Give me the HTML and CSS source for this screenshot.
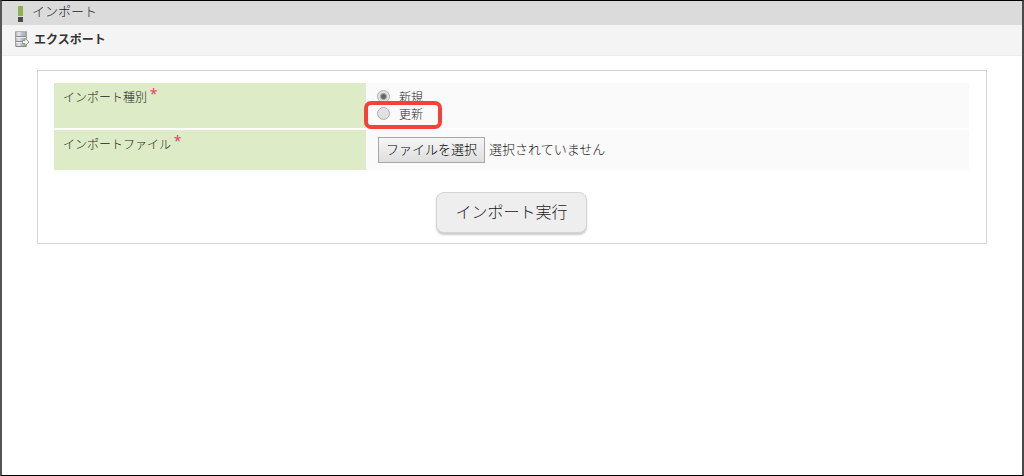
FILE: index.html
```html
<!DOCTYPE html>
<html lang="ja">
<head>
<meta charset="utf-8">
<title>インポート</title>
<link rel="stylesheet" href="styles.css">
</head>
<body>
<div class="frame">
  <header class="title-bar">
    <svg class="title-icon" width="5" height="16" viewBox="0 0 5 16" aria-hidden="true">
      <rect width="5" height="10" fill="#8cb34b"/>
      <rect y="11" width="5" height="5" fill="#4a4d40"/>
    </svg>
    <h1 class="title">インポート</h1>
  </header>
  <nav class="tool-bar">
    <a class="tool-link" href="#">
      <svg class="tool-icon" width="15" height="16" viewBox="0 0 15 16" aria-hidden="true">
        <defs>
          <linearGradient id="server" x1="0" x2="1">
            <stop offset="0" stop-color="#a4a4a4"/>
            <stop offset=".3" stop-color="#e6e6ea"/>
            <stop offset=".6" stop-color="#b9b9ca"/>
            <stop offset="1" stop-color="#a2a2a2"/>
          </linearGradient>
        </defs>
        <rect width="12" height="16" rx="1" fill="url(#server)"/>
        <path d="M.5 1v14M11.500 1v14" stroke="#a0a0a0"/>
        <path d="M1 .5h10" stroke="#b4b4b4"/>
        <path d="M1 5.500h10M1 10.500h10M1 15.500h10" stroke="#8a8a8a"/>
        <path d="M1 6.500h10M1 11.500h10" stroke="#ededed"/>
        <path d="M7.500 9.500h2.500v-2.500l4 4-4 4v-2.500h-2.500z" fill="#eef4ea" stroke="#8d9b8d"/>
      </svg>
      <span>エクスポート</span>
    </a>
  </nav>
  <main class="content">
    <form class="panel">
      <div class="fields">
        <div class="label-cell" id="kind-label">インポート種別 <span class="required">*</span></div>
        <div class="value-cell kind-options" role="radiogroup" aria-labelledby="kind-label">
          <label class="option"><input class="radio" type="radio" name="kind" checked>新規</label>
          <label class="option"><input class="radio" type="radio" name="kind">更新</label>
          <span class="highlight"></span>
        </div>
        <label class="label-cell" for="file-button">インポートファイル <span class="required">*</span></label>
        <div class="value-cell file-cell">
          <button class="file-button" id="file-button" type="button">ファイルを選択</button>
          <span class="file-status">選択されていません</span>
        </div>
      </div>
      <button class="submit" type="button">インポート実行</button>
    </form>
  </main>
</div>
</body>
</html>
```
FILE: styles.css
```css
* {
  box-sizing: border-box;
}

body {
  margin: 0;
  background: #fff;
  color: #1c1c1c;
  font-family: "Noto Sans CJK JP", sans-serif;
  font-size: 12px;
  font-weight: 300;
  line-height: 16px;
}

button {
  font-family: inherit;
  font-weight: inherit;
}

.frame {
  min-height: 100vh;
  border: solid #000;
  border-width: 1px 2px 1px 2px;
  border-left-color: #555;
  border-right-color: #4a4a4a;
}

.title-bar {
  display: flex;
  align-items: center;
  gap: 9px;
  height: 24px;
  padding: 0 16px;
  background: #dbdbdb;
}

.title-icon {
  margin-top: 1px;
}

.title {
  margin: 0 0 4px;
  font-size: 13px;
  font-weight: 300;
  line-height: 20px;
}

.tool-bar {
  display: flex;
  align-items: center;
  height: 31px;
  padding: 0 13px 2px;
  background: #f4f4f4;
  border-bottom: 1px solid #ececec;
}

.tool-link {
  display: flex;
  align-items: center;
  gap: 4px;
  color: #333;
  font-weight: 700;
  text-decoration: none;
}

.content {
  padding: 14px 35px;
}

.panel {
  display: flex;
  flex-direction: column;
  align-items: center;
  padding: 12px 17px 10px 16px;
  border: 1px solid #d4d4d4;
}

.fields {
  display: grid;
  grid-template-columns: 34.1% 1fr;
  row-gap: 2px;
  width: 100%;
}

.label-cell {
  padding: 6px 9px;
  background: #ddebc6;
}

.required {
  color: #ee3366;
  font-family: "Open Sans", sans-serif;
  font-size: 14px;
  font-weight: 400;
  line-height: 8px;
  vertical-align: 3px;
}

.value-cell {
  background: #fafafa;
}

.kind-options {
  position: relative;
  padding: 5px 11px 6px;
}

.option {
  display: flex;
  align-items: center;
  gap: 9px;
  width: 60px;
  height: 17px;
}

.radio {
  appearance: none;
  width: 13px;
  height: 13px;
  margin: 0;
  border: 1px solid #b0b0b0;
  border-radius: 50%;
  background: linear-gradient(#e6e6e6, #dcdcdc);
}

.radio:checked {
  background: radial-gradient(circle, #666 2px, #e2e2e2 4px);
}

.highlight {
  position: absolute;
  top: 18px;
  left: -2px;
  width: 78px;
  height: 28px;
  border: 4px solid #f44336;
  border-radius: 7px;
}

.file-cell {
  display: flex;
  align-items: center;
  gap: 4px;
  padding: 7px 12px;
  font-size: 13px;
}

.file-status {
  padding-bottom: 2px;
}

.file-button {
  height: 26px;
  padding: 0 7px 2px;
  border: 1px solid #a6a6a6;
  border-radius: 0;
  background: linear-gradient(#f6f6f6, #dedede);
  color: #000;
  font-size: 13px;
  line-height: 20px;
}

.submit {
  height: 41px;
  margin-top: 22px;
  padding: 0 18px 4px;
  border: 1px solid #d4d4d4;
  border-radius: 8px;
  background: #eee;
  box-shadow: 0 2px 2px #ccc;
  color: #1c1c1c;
  font-size: 16px;
}
```
